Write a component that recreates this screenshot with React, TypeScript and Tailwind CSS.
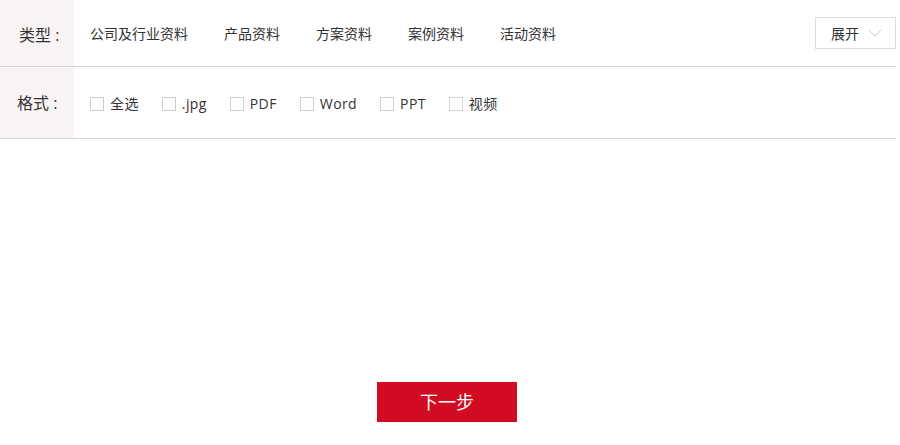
import { useState } from "react";

const types = ["公司及行业资料", "产品资料", "方案资料", "案例资料", "活动资料"];
const formats = ["全选", ".jpg", "PDF", "Word", "PPT", "视频"];

export default function App() {
    const [checked, setChecked] = useState<string[]>([]);

    const toggle = (f: string) =>
        setChecked((prev) => (prev.includes(f) ? prev.filter((x) => x !== f) : [...prev, f]));

    return (
        <div
            className="w-[900px] h-[445px] bg-white text-[#333]"
            style={{ fontFamily: '"Open Sans", "Noto Sans CJK SC", sans-serif' }}
        >
            <div className="w-[896px]">
                {/* 类型 */}
                <div className="flex h-[67px] border-b border-[#d4d4d4]">
                    <div className="w-[74px] shrink-0 bg-[#f9f4f4] flex items-center pl-[19px] pt-[3px] text-[16px]">
                        类型 :
                    </div>
                    <div className="flex-1 flex items-center pl-[16px]">
                        {types.map((t) => (
                            <span key={t} className="text-[14px] mr-[36px] cursor-pointer">
                                {t}
                            </span>
                        ))}
                        <button className="ml-auto self-start mt-[17px] w-[81px] h-[32px] border border-[#dcdcdc] flex items-center pl-[15px] text-[14px]">
                            展开
                            <svg className="ml-[9px]" width="14" height="8" viewBox="0 0 14 8" fill="none">
                                <path d="M0.5 0.5 L7 7 L13.5 0.5" stroke="#cccccc" strokeWidth="1" />
                            </svg>
                        </button>
                    </div>
                </div>

                {/* 格式 */}
                <div className="flex h-[72px] border-b border-[#d4d4d4]">
                    <div className="w-[74px] shrink-0 bg-[#f9f4f4] flex items-center pl-[17px] pt-[1px] text-[16px]">
                        格式 :
                    </div>
                    <div className="flex-1 flex items-center pl-[16px] pt-[2px]">
                        {formats.map((f) => (
                            <label key={f} className="flex items-center mr-[23px] text-[14px] cursor-pointer">
                                <span
                                    onClick={() => toggle(f)}
                                    className={
                                        "w-[14px] h-[14px] border border-[#cfcfcf] mr-[6px] " +
                                        (checked.includes(f) ? "bg-[#d20c22]" : "bg-white")
                                    }
                                />
                                <span className="tracking-[0.4px]">{f}</span>
                            </label>
                        ))}
                    </div>
                </div>
            </div>

            <div className="flex justify-center pt-[243px]">
                <button className="ml-[-6px] w-[140px] h-[40px] bg-[#d10b21] text-white text-[18px]">
                    下一步
                </button>
            </div>
        </div>
    );
}
